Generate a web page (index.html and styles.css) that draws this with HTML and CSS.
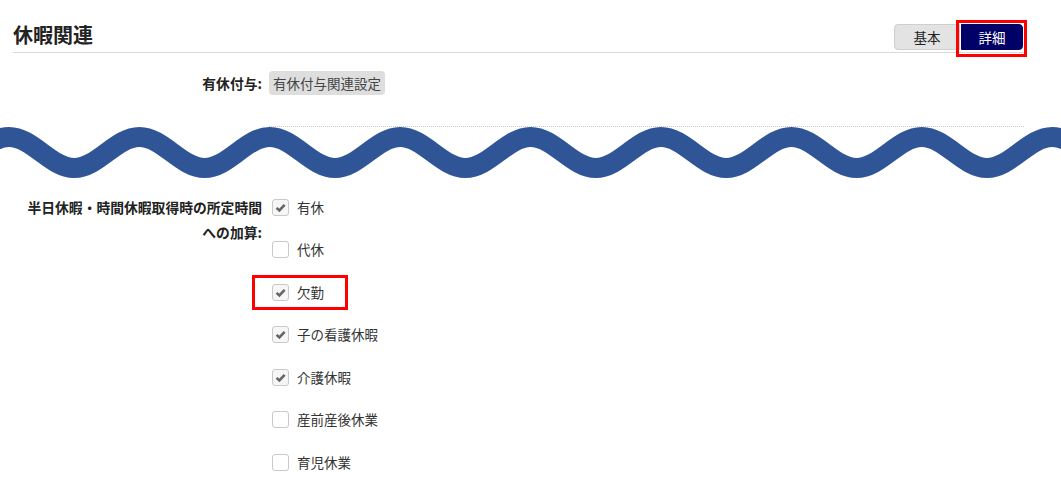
FILE: index.html
```html
<!DOCTYPE html>
<html lang="ja">
<head>
    <meta charset="UTF-8">
    <meta name="viewport" content="width=device-width, initial-scale=1.0">
    <title>休暇関連</title>
    <link rel="stylesheet" href="styles.css">
</head>
<body>

<div class="wrap">
    <header class="section-head">
        <h1>休暇関連</h1>
        <div class="tabs">
            <button class="tab">基本</button>
            <span class="mark mark-tab"><button class="tab active">詳細</button></span>
        </div>
    </header>

    <div class="form-row row-grant">
        <div class="form-label">有休付与:</div>
        <div class="form-field field-dotted">
            <button class="btn-gray">有休付与関連設定</button>
        </div>
    </div>

    <div class="form-row row-checks">
        <div class="form-label label-multi">半日休暇・時間休暇取得時の所定時間<br>への加算:</div>
        <div class="form-field">
            <div class="check-list">
                <div class="check-row"><span class="check-item"><span class="box checked"><svg viewBox="0 0 16 16"><path d="M3.8 8.4 L6.8 11.2 L12.4 5.2"/></svg></span>有休</span></div>
                <div class="check-row"><span class="check-item"><span class="box"></span>代休</span></div>
                <div class="check-row"><span class="check-item mark mark-item"><span class="box checked"><svg viewBox="0 0 16 16"><path d="M3.8 8.4 L6.8 11.2 L12.4 5.2"/></svg></span>欠勤</span></div>
                <div class="check-row"><span class="check-item"><span class="box checked"><svg viewBox="0 0 16 16"><path d="M3.8 8.4 L6.8 11.2 L12.4 5.2"/></svg></span>子の看護休暇</span></div>
                <div class="check-row"><span class="check-item"><span class="box checked"><svg viewBox="0 0 16 16"><path d="M3.8 8.4 L6.8 11.2 L12.4 5.2"/></svg></span>介護休暇</span></div>
                <div class="check-row"><span class="check-item"><span class="box"></span>産前産後休業</span></div>
                <div class="check-row"><span class="check-item"><span class="box"></span>育児休業</span></div>
            </div>
        </div>
    </div>

    <!-- wavy "omitted" marker laid over the page -->
    <svg class="wave" viewBox="0 0 1061 75" width="1061" height="75">
        <path d="M-56.2 53 C-32.5 53 -14.7 22 9 22 S50.5 53 74.2 53 S115.7 22 139.4 22 S180.9 53 204.6 53 S246.1 22 269.8 22 S311.3 53 335 53 S376.5 22 400.2 22 S441.7 53 465.4 53 S506.9 22 530.6 22 S572.1 53 595.8 53 S637.3 22 661 22 S702.5 53 726.2 53 S767.7 22 791.4 22 S832.9 53 856.6 53 S898.1 22 921.8 22 S963.3 53 987 53 S1028.5 22 1052.2 22 S1093.7 53 1117.4 53"/>
    </svg>
</div>

</body>
</html>
```

FILE: styles.css
```css
body {
    margin: 0;
    font-family: "Noto Sans CJK JP", "Noto Sans", sans-serif;
    font-size: 13.5px;
    color: #333;
    background-color: #fff;
}

.wrap {
    position: relative;
    padding: 0 37px 0 13px;
}

.section-head {
    display: flex;
    justify-content: space-between;
    align-items: flex-end;
    padding: 20px 0 2px;
    border-bottom: 1px solid #dcdcdc;
}

h1 {
    margin: 0;
    font-size: 20px;
    line-height: 30px;
    font-weight: bold;
    color: #222;
}

.tabs {
    display: flex;
    align-items: flex-end;
}

.tab {
    font-family: inherit;
    font-size: 13.5px;
    height: 26px;
    padding: 0;
    border: 1px solid #cfcfcf;
    background-color: #e3e3e3;
    color: #222;
}

.tab:first-child {
    width: 66px;
    margin-right: 1px;
    border-radius: 4px 0 0 4px;
}

.tab.active {
    display: block;
    width: 62px;
    background-color: #000066; /* navy */
    border-color: #000066;
    color: #fff;
    border-radius: 0 4px 4px 0;
}

/* red annotation boxes */
.mark {
    border: 3px solid #ff0000;
}

.mark-tab {
    display: block;
    margin: -4px -3px -7px -5px;
    padding: 1px 0 4px 2px;
}

.form-row {
    display: grid;
    grid-template-columns: 249px 1fr;
    column-gap: 7px;
}

.form-label {
    text-align: right;
    font-weight: bold;
    font-size: 13.8px;
    color: #222;
}

.row-grant {
    margin-top: 18px;
}

.row-grant .form-label {
    line-height: 24px;
}

.field-dotted {
    padding-bottom: 31px;
    border-bottom: 1px dotted #c8c8c8;
}

.btn-gray {
    font-family: inherit;
    font-size: 13.5px;
    height: 24px;
    padding: 0 4px;
    border: none;
    border-radius: 4px;
    background-color: #dedede;
    color: #444;
}

.row-checks {
    margin-top: 59px;
}

.label-multi {
    padding-top: 8.5px;
    line-height: 25px;
}

.check-list {
    padding-left: 3px;
}

.check-row {
    display: flex;
    align-items: center;
    height: 42.5px;
}

.check-item {
    display: inline-flex;
    align-items: center;
    gap: 8px;
    line-height: 19px;
}

.mark-item {
    margin-left: -20px;
    padding: 5px 21px 5px 17px;
}

.box {
    display: inline-block;
    width: 15px;
    height: 15px;
    border: 1px solid #c9c9c9;
    border-radius: 3px;
    background-color: #fff;
}

.box.checked {
    background-color: #f6f6f6;
}

.box svg {
    display: block;
    width: 15px;
    height: 15px;
}

.box path {
    fill: none;
    stroke: #666;
    stroke-width: 2.8;
}

.wave {
    position: absolute;
    top: 115px;
    left: 0;
}

.wave path {
    fill: none;
    stroke: #2f5597;
    stroke-width: 20;
}
```
